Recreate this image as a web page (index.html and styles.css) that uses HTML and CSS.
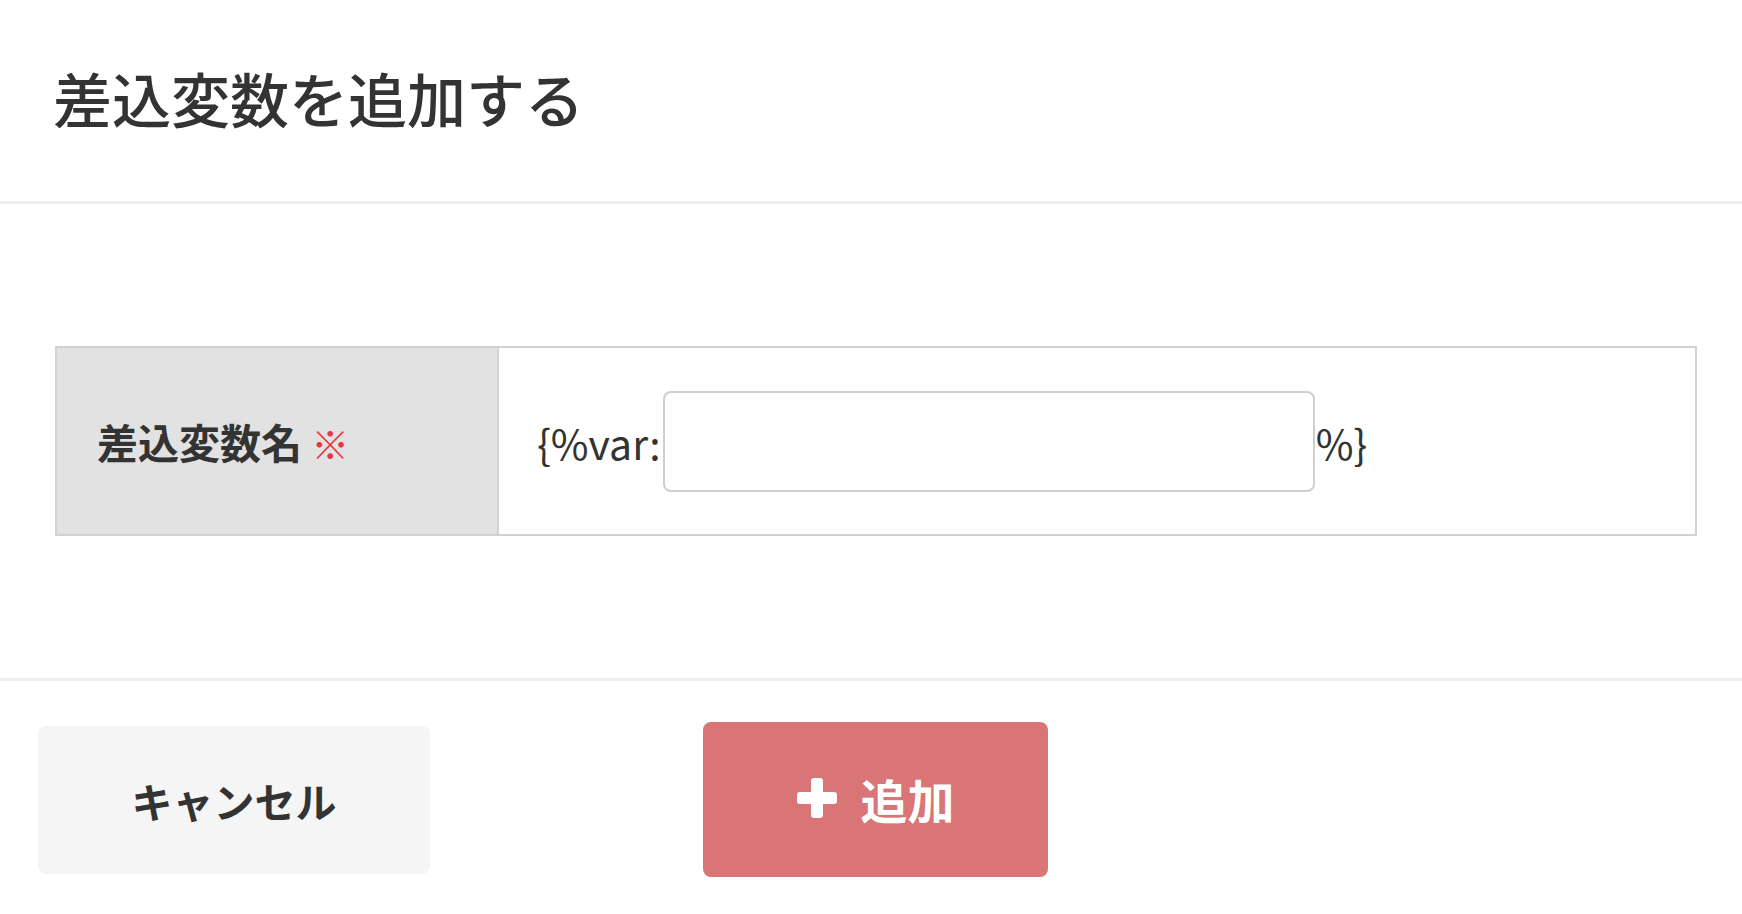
FILE: index.html
```html
<!DOCTYPE html>
<html lang="ja">
<head>
    <meta charset="UTF-8">
    <meta name="viewport" content="width=device-width, initial-scale=1.0">
    <title>差込変数を追加する</title>
    <link rel="stylesheet" href="styles.css">
</head>
<body>
    <div class="modal">
        <div class="modal-header">
            <h2 class="modal-title">差込変数を追加する</h2>
        </div>
        <div class="modal-body">
            <table class="form-table">
                <tr>
                    <th>差込変数名 <span class="required">※</span></th>
                    <td>
                        <div class="var-field">
                            <span class="var-affix">{%var:</span>
                            <input type="text" id="var-name" name="var_name">
                            <span class="var-affix">%}</span>
                        </div>
                    </td>
                </tr>
            </table>
        </div>
        <div class="modal-footer">
            <button type="button" class="btn btn-cancel">キャンセル</button>
            <button type="submit" class="btn btn-add">
                <svg class="icon-plus" viewBox="0 0 40 40" width="40" height="40" aria-hidden="true">
                    <rect x="14" y="0" width="12" height="40" rx="3" fill="#fff"/>
                    <rect x="0" y="14" width="40" height="12" rx="3" fill="#fff"/>
                </svg>
                <span>追加</span>
            </button>
        </div>
    </div>
</body>
</html>
```

FILE: styles.css
```css
body {
    margin: 0;
    background-color: #fff;
    font-family: "Noto Sans CJK JP", "Noto Sans", sans-serif;
    color: #333;
}
.modal {
    width: 100%;
}
.modal-header {
    padding: 57px 53px 63px;
    border-bottom: 3px solid #efefef;
}
.modal-title {
    margin: 0;
    font-size: 59px;
    font-weight: 500;
    line-height: 81px;
    color: #333;
}
.modal-body {
    padding: 142px 45px 142px 55px;
}
.form-table {
    width: 100%;
    border-collapse: collapse;
    border: 2px solid #d2d2d2;
}
.form-table th {
    width: 400px;
    padding: 0 0 0 40px;
    background-color: #e2e2e2;
    border-right: 2px solid #d2d2d2;
    text-align: left;
    font-size: 41px;
    font-weight: 700;
    color: #333;
    vertical-align: middle;
}
.required {
    color: #e8383d;
    font-size: 38px;
}
.form-table td {
    padding: 43px 0 42px 38px;
    background-color: #fff;
}
.var-field {
    display: flex;
    align-items: center;
    font-size: 41px;
    color: #333;
}
.var-field input {
    box-sizing: border-box;
    width: 652px;
    height: 101px;
    margin: 0 1px 0 2px;
    border: 2px solid #cfcfcf;
    border-radius: 8px;
    font-size: 40px;
    font-family: inherit;
    padding: 0 20px;
}
.modal-footer {
    display: flex;
    align-items: center;
    padding: 41px 0 37px 38px;
    border-top: 3px solid #efefef;
}
.btn {
    border: none;
    border-radius: 8px;
    font-family: inherit;
    font-weight: 700;
    cursor: pointer;
}
.btn-cancel {
    width: 392px;
    height: 148px;
    background-color: #f5f5f5;
    color: #333;
    font-size: 41px;
}
.btn-add {
    display: flex;
    align-items: center;
    justify-content: center;
    gap: 24px;
    width: 345px;
    height: 155px;
    margin-left: 273px;
    padding-bottom: 4px;
    background-color: #d97477;
    color: #fff;
    font-size: 47px;
}
.icon-plus {
    display: block;
}
```
